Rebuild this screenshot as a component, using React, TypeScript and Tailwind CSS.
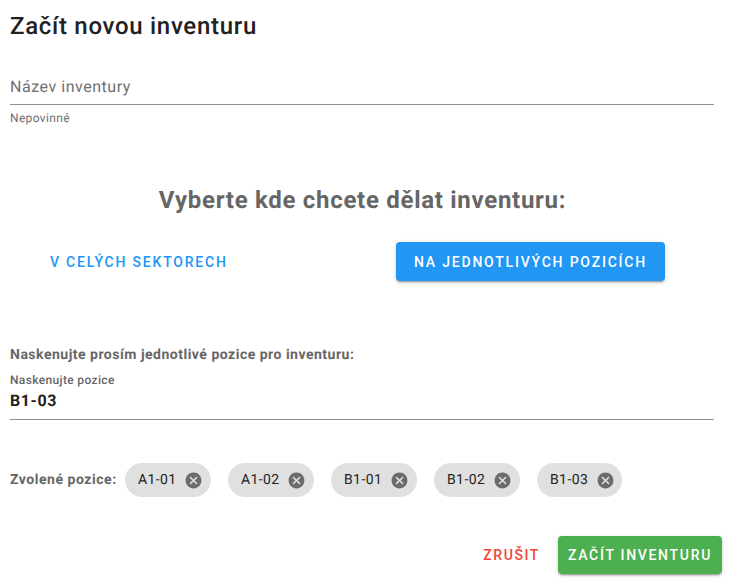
import React from 'react';

const positions = ['A1-01', 'A1-02', 'B1-01', 'B1-02', 'B1-03'];

const Chip: React.FC<{ label: string }> = ({ label }) => (
  <span className="h-[34px] w-[86px] last:w-[85px] pl-[13px] flex items-center rounded-full bg-[#e0e0e0] text-[14px] tracking-[0.4px] text-[#1f1f1f]">
    <span className="w-[38px] whitespace-nowrap">{label}</span>
    <svg className="ml-[7.5px]" width="19" height="19" viewBox="0 0 24 24">
      <path
        fill="#6b6b6b"
        d="M12 2C6.47 2 2 6.47 2 12s4.47 10 10 10 10-4.47 10-10S17.53 2 12 2zm5 13.59L15.59 17 12 13.41 8.41 17 7 15.59 10.59 12 7 8.41 8.41 7 12 10.59 15.59 7 17 8.41 13.41 12 17 15.59z"
      />
    </svg>
  </span>
);

export default function App() {
  return (
    <div className="w-[734px] h-[583px] bg-white overflow-hidden font-['Roboto',sans-serif] [text-rendering:geometricPrecision] text-[#212121]">
      {/* Header */}
      <h1 className="pl-[10px] pt-[10px] text-[24px] leading-[32px] tracking-[0.7px] font-medium">Začít novou inventuru</h1>

      {/* Name field */}
      <div className="mx-[10px] w-[704px] mt-[28px]">
        <div className="h-[35px] border-b border-[#8f8f8f] text-[16px] leading-[34px] tracking-[0.53px] text-[#6f6f6f]">Název inventury</div>
        <div className="mt-[6px] text-[12px] leading-[14px] tracking-[0.35px] text-[#6f6f6f]">Nepovinné</div>
      </div>

      {/* Mode */}
      <h2 className="mt-[59px] pr-[9px] text-center text-[24px] leading-[32px] tracking-[0.71px] font-bold text-[#666666]">Vyberte kde chcete dělat inventuru:</h2>
      <div className="mt-[26px] h-[39px] flex items-center">
        <button className="ml-[50px] w-[177px] pt-[1px] text-left text-[14px] font-medium tracking-[1.8px] whitespace-nowrap text-[#2196f3]">V CELÝCH SEKTORECH</button>
        <button className="ml-[169px] w-[269px] h-[39px] pt-[1px] rounded bg-[#2196f3] text-[14px] font-medium tracking-[1.8px] whitespace-nowrap text-white shadow-[0_3px_1px_-2px_rgba(0,0,0,0.2),0_2px_2px_0_rgba(0,0,0,0.14),0_1px_5px_0_rgba(0,0,0,0.12)]">NA JEDNOTLIVÝCH POZICÍCH</button>
      </div>

      {/* Scan */}
      <p className="mt-[64px] pl-[10px] text-[14px] leading-[20px] tracking-[0.5px] font-bold text-[#666666]">Naskenujte prosím jednotlivé pozice pro inventuru:</p>
      <div className="mx-[10px] w-[704px] mt-[8px] h-[47px] border-b border-[#8f8f8f]">
        <div className="text-[12px] leading-[14px] tracking-[0.35px] font-medium text-[#666666]">Naskenujte pozice</div>
        <div className="mt-[2px] text-[16px] leading-[24px] tracking-[0.6px] font-bold text-[#212121]">B1-03</div>
      </div>

      {/* Selected */}
      <div className="mt-[43px] pl-[10px] flex items-center">
        <span className="w-[115px] text-[14px] tracking-[0.53px] whitespace-nowrap font-bold text-[#666666]">Zvolené pozice:</span>
        <div className="flex gap-[17px]">
          {positions.map((p) => (
            <Chip key={p} label={p} />
          ))}
        </div>
      </div>

      {/* Actions */}
      <div className="mt-[39px] pr-[12px] flex items-center justify-end">
        <button className="mr-[18px] text-[14px] font-medium tracking-[1.6px] text-[#f44336]">ZRUŠIT</button>
        <button className="w-[164px] h-[38px] rounded bg-[#4caf50] text-[14px] font-medium tracking-[1.7px] whitespace-nowrap text-white shadow-[0_3px_1px_-2px_rgba(0,0,0,0.2),0_2px_2px_0_rgba(0,0,0,0.14),0_1px_5px_0_rgba(0,0,0,0.12)]">ZAČÍT INVENTURU</button>
      </div>
    </div>
  );
}
